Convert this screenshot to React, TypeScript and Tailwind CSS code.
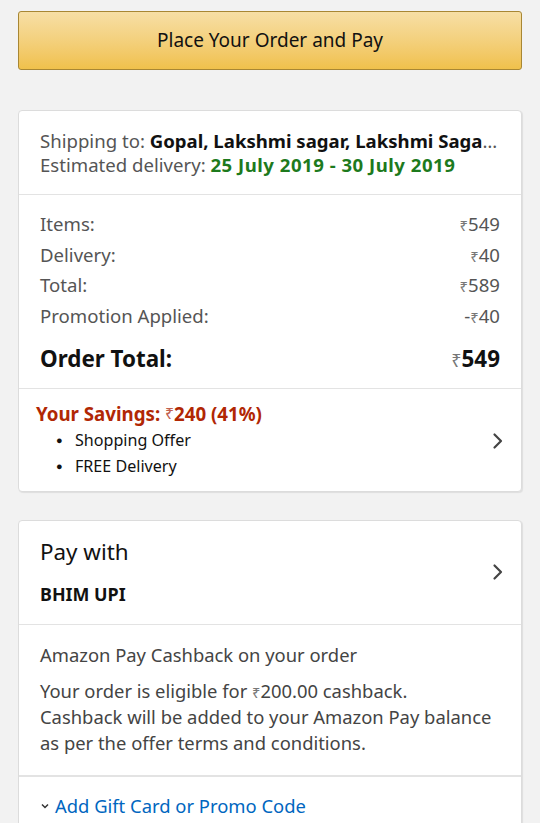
import React from "react";

const Rs = ({ className = "" }: { className?: string }) => (
  <span className={"text-[0.8em] leading-none text-[#777] font-normal " + className}>₹</span>
);

const Chevron = () => (
  <svg width="12" height="18" viewBox="0 0 12 18" fill="none">
    <path d="M2.5 2.5 L9 9 L2.5 15.5" stroke="#444" strokeWidth="2.2" strokeLinecap="round" strokeLinejoin="round" />
  </svg>
);

export default function App() {
  const rows: [string, React.ReactNode][] = [
    ["Items:", <><Rs />549</>],
    ["Delivery:", <><Rs />40</>],
    ["Total:", <><Rs />589</>],
    ["Promotion Applied:", <>-<Rs />40</>],
  ];
  return (
    <div
      className="min-h-screen bg-[#f2f2f2] px-[18px] pt-[11px] pb-8"
      style={{ fontFamily: '"Noto Sans", "Open Sans", sans-serif' }}
    >
      <button className="flex h-[59px] w-full items-center justify-center rounded-[3px] border border-[#a88734] bg-gradient-to-b from-[#f7dfa5] to-[#f0c14b] text-[19px] text-[#111]">
        Place Your Order and Pay
      </button>

      <div className="mt-[40px] rounded-[4px] border border-[#dcdcdc] bg-white shadow-[1px_1px_1px_rgba(0,0,0,0.08)]">
        <div className="px-[21px] pt-[18px] pb-[17px] text-[18.6px] text-[#555]">
          <div className="flex h-[24px] items-center">
            <div className="truncate">
              Shipping to: <span className="font-bold text-[#111]">Gopal, Lakshmi sagar, Lakshmi Sagar, Bangalore</span>
            </div>
          </div>
          <div className="flex h-[24px] items-center whitespace-nowrap">
            Estimated delivery:&nbsp;<span className="font-bold tracking-[0.5px] text-[#1d7a1d]">25 July 2019 - 30 July 2019</span>
          </div>
        </div>
        <div className="border-t border-[#e3e3e3] px-[21px] pt-[14px] pb-[14px]">
          {rows.map(([l, v]) => (
            <div key={l} className="flex h-[30.5px] items-center justify-between text-[18.6px] text-[#555]">
              <span>{l}</span>
              <span>{v}</span>
            </div>
          ))}
          <div className="mt-[13px] flex h-[30px] items-center justify-between text-[22.4px] font-bold text-[#111]">
            <span>Order Total:</span>
            <span><Rs />549</span>
          </div>
        </div>
        <div className="flex items-center border-t border-[#e3e3e3] pl-[17px] pr-[17px] pt-[13px] pb-[12px]">
          <div className="flex-1">
            <div className="flex h-[24px] items-center text-[18.7px] font-bold text-[#b12704]">
              Your Savings:&nbsp;<span className="font-normal text-[0.85em] text-[#c06050]">₹</span>240 (41%)
            </div>
            <ul className="mt-[1px] text-[16.1px] text-[#111]">
              <li className="flex h-[26px] items-center pl-[20px]"><span className="w-[19px] text-[11px]">●</span>Shopping Offer</li>
              <li className="flex h-[26px] items-center pl-[20px]"><span className="w-[19px] text-[11px]">●</span>FREE Delivery</li>
            </ul>
          </div>
          <Chevron />
        </div>
      </div>

      <div className="mt-[28px] rounded-[4px] border border-[#dcdcdc] bg-white shadow-[1px_1px_1px_rgba(0,0,0,0.08)]">
        <div className="flex items-center pl-[21px] pr-[17px] pt-[17px] pb-[18px]">
          <div className="flex-1">
            <div className="flex h-[28px] items-center text-[22.4px] text-[#111]">Pay with</div>
            <div className="mt-[16px] flex h-[24px] items-center text-[17.9px] font-bold text-[#111]">BHIM UPI</div>
          </div>
          <Chevron />
        </div>
        <div className="border-t border-[#e3e3e3] px-[21px] pt-[18px] pb-[19px] text-[#444]">
          <div className="flex h-[24px] items-center text-[18.4px]">Amazon Pay Cashback on your order</div>
          <div className="mt-[11px] text-[18.4px] leading-[26px]">
            Your order is eligible for <Rs />200.00 cashback.
            <br />
            Cashback will be added to your Amazon Pay balance as per the offer terms and conditions.
          </div>
        </div>
        <div className="border-t-2 border-[#e3e3e3] px-[21px] pt-[17px] pb-[16px]">
          <div className="flex h-[24px] items-center text-[18.4px] text-[#0066c0]">
            <svg width="10" height="8" viewBox="0 0 10 8" className="mr-[5px]">
              <path d="M2 2.5 L5 5.5 L8 2.5" stroke="#333" strokeWidth="1.5" fill="none" />
            </svg>
            Add Gift Card or Promo Code
          </div>
        </div>
      </div>
    </div>
  );
}
